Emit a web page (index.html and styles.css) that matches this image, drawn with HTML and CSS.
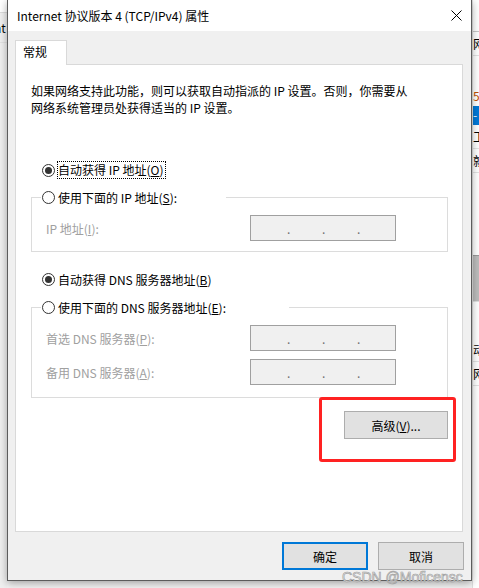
FILE: index.html
```html
<!DOCTYPE html>
<html lang="zh-CN">
<head>
    <meta charset="UTF-8">
    <meta name="viewport" content="width=device-width, initial-scale=1.0">
    <title>Internet 协议版本 4 (TCP/IPv4) 属性</title>
    <link rel="stylesheet" href="styles.css">
</head>
<body>
    <div class="desktop">
        <div class="side side-left">
            <div class="bg-white"></div>
            <div class="bg-text">nt</div>
        </div>

        <div class="dialog">
            <div class="titlebar">
                <span class="title">Internet 协议版本 4 (TCP/IPv4) 属性</span>
                <svg class="close" width="11" height="11" viewBox="0 0 11 11">
                    <path d="M0.5 0.5 L10.5 10.5 M10.5 0.5 L0.5 10.5" stroke="#000" stroke-width="1" fill="none"/>
                </svg>
            </div>

            <div class="client">
                <div class="tabs">
                    <div class="tab">常规</div>
                </div>
                <div class="panel">
                    <p class="desc">如果网络支持此功能，则可以获取自动指派的 IP 设置。否则，你需要从<br>网络系统管理员处获得适当的 IP 设置。</p>

                    <div class="radio checked radio-first">
                        <span class="dot"></span><span class="focus">自动获得 IP 地址(<u>O</u>)</span>
                    </div>

                    <fieldset class="group group-ip">
                        <legend class="legend-ip">
                            <span class="radio"><span class="dot"></span>使用下面的 IP 地址(<u>S</u>):</span>
                        </legend>
                        <div class="field">
                            <span class="field-label">IP 地址(<u>I</u>):</span>
                            <span class="ipbox"><i>.</i><i>.</i><i>.</i></span>
                        </div>
                    </fieldset>

                    <div class="radio checked radio-dns">
                        <span class="dot"></span>自动获得 DNS 服务器地址(<u>B</u>)
                    </div>

                    <fieldset class="group group-dns">
                        <legend class="legend-dns">
                            <span class="radio"><span class="dot"></span>使用下面的 DNS 服务器地址(<u>E</u>):</span>
                        </legend>
                        <div class="field">
                            <span class="field-label">首选 DNS 服务器(<u>P</u>):</span>
                            <span class="ipbox"><i>.</i><i>.</i><i>.</i></span>
                        </div>
                        <div class="field">
                            <span class="field-label">备用 DNS 服务器(<u>A</u>):</span>
                            <span class="ipbox"><i>.</i><i>.</i><i>.</i></span>
                        </div>
                    </fieldset>

                    <button class="btn btn-adv">高级(<u>V</u>)...</button>
                </div>

                <div class="footer">
                    <button class="btn btn-default">确定</button>
                    <button class="btn">取消</button>
                </div>
            </div>
        </div>

        <div class="side side-right">
            <div class="bg-white bg-line"></div>
            <div class="bg-text">网络</div>
            <div class="bg-gap1"></div>
            <div class="bg-text bg-small">5 </div>
            <div class="bg-blue">- </div>
            <div class="bg-text">工作</div>
            <div class="bg-text">就绪</div>
            <div class="bg-gap2"></div>
            <div class="bg-grey"></div>
            <div class="bg-gap3"></div>
            <div class="bg-text">动网</div>
            <div class="bg-text">网络</div>
            <div class="bg-gap4"></div>
        </div>

        <!-- 标注框 -->
        <div class="annot"></div>
        <div class="watermark">CSDN @Moficensc</div>
    </div>
</body>
</html>
```

FILE: styles.css
```css
body {
    margin: 0;
    font-family: "Noto Sans CJK SC", sans-serif;
    font-size: 12px;
    color: #000;
}
.desktop {
    position: relative;
    display: flex;
    width: 479px;
    height: 588px;
    overflow: hidden;
    background-color: #f3f3f3;
}
.side {
    width: 7px;
    flex: none;
    overflow: hidden;
    white-space: nowrap;
}
.side-left {
    background-color: #f0f0f0;
}
.side-right {
    background-color: #fff;
    border-left: 1px solid #e0e0e0;
    box-sizing: border-box;
}
.bg-white {
    height: 12px;
    background-color: #fff;
    border-bottom: 1px solid #dcdcdc;
}
.side-right .bg-line {
    height: 31px;
    border-bottom-color: #c8c8c8;
}
.bg-text {
    height: 23px;
    line-height: 23px;
    border-bottom: 1px solid #e3e3e3;
    font-size: 12px;
}
.side-left .bg-text {
    height: 29px;
    line-height: 29px;
    text-indent: -6px;
}
.bg-gap1 { height: 30px; }
.bg-small { height: 20px; line-height: 20px; color: #c05000; border: none; }
.bg-blue {
    height: 19px;
    background-color: #0078d7;
    color: #fff;
}
.bg-gap2 { height: 82px; }
.bg-grey {
    height: 45px;
    background-color: #bcbcbc;
    border-top: 1px solid #999;
}
.bg-gap3 { height: 36px; border-top: 1px solid #e0e0e0; }
.bg-gap4 { height: 200px; }

.dialog {
    position: relative;
    z-index: 1;
    display: flex;
    flex-direction: column;
    width: 465px;
    height: 581px;
    box-sizing: border-box;
    border: 1px solid #5c5c5c;
    border-top: none;
    background-color: #f0f0f0;
    box-shadow: 0 2px 8px rgba(0, 0, 0, 0.35);
}
.titlebar {
    display: flex;
    align-items: center;
    height: 31px;
    padding: 0 9px;
    background-color: #fff;
}
.close {
    margin-left: auto;
}
.client {
    flex: 1;
    padding: 9px 8px 0 7px;
}
.tabs {
    position: relative;
    z-index: 1;
    display: flex;
    margin-bottom: -1px;
}
.tab {
    width: 52px;
    height: 25px;
    box-sizing: border-box;
    padding: 2px 0 0 7px;
    line-height: 17px;
    border: 1px solid #d9d9d9;
    border-bottom: none;
    background-color: #fff;
}
.panel {
    height: 468px;
    box-sizing: border-box;
    padding-top: 17px;
    border: 1px solid #d9d9d9;
    background-color: #fff;
}
.desc {
    margin: 0 0 0 15px;
    line-height: 17px;
}
.radio {
    display: flex;
    align-items: center;
    height: 20px;
    white-space: nowrap;
}
.radio-first {
    margin: 44px 0 0 26px;
}
.radio-dns {
    margin: 17px 0 0 26px;
}
.dot {
    display: flex;
    align-items: center;
    justify-content: center;
    width: 13px;
    height: 13px;
    box-sizing: border-box;
    margin-right: 3px;
    border: 1px solid #333;
    border-radius: 50%;
    background-color: #fff;
}
.checked .dot::after {
    content: "";
    width: 7px;
    height: 7px;
    border-radius: 50%;
    background-color: #333;
}
.focus {
    line-height: 16px;
    padding-right: 1px;
    outline: 1px dotted #000;
}
.group {
    width: 417px;
    box-sizing: border-box;
    min-width: 0;
    margin: 7px 0 0 15px;
    padding: 0 0 10px 0;
    border: 1px solid #dcdcdc;
}
.group-dns {
    margin-top: 8px;
    padding-bottom: 12px;
}
.group legend {
    box-sizing: border-box;
    margin-left: 9px;
    padding: 0 0 0 1px;
}
.legend-ip {
    width: 185px;
}
.legend-dns {
    width: 248px;
}
.field {
    display: flex;
    align-items: center;
    margin-top: 8px;
    padding-left: 14px;
    color: #a0a0a0;
}
.field-label {
    width: 204px;
}
.ipbox {
    display: flex;
    width: 146px;
    height: 26px;
    box-sizing: border-box;
    padding-left: 36px;
    border: 1px solid #a0a0a0;
    background-color: #f0f0f0;
}
.ipbox i {
    width: 35px;
    font-style: normal;
    line-height: 26px;
    color: #707070;
}
.btn {
    height: 28px;
    box-sizing: border-box;
    padding: 0;
    font: inherit;
    color: #000;
    border: 1px solid #adadad;
    background-color: #e1e1e1;
}
.btn-adv {
    display: block;
    width: 104px;
    margin: 13px 0 0 328px;
}
.footer {
    display: flex;
    justify-content: flex-end;
    gap: 10px;
    margin-right: -1px;
    padding-top: 10px;
}
.footer .btn {
    width: 86px;
}
.btn-default {
    border: 2px solid #0078d7;
}
.annot {
    position: absolute;
    z-index: 2;
    left: 319px;
    top: 397px;
    width: 137px;
    height: 65px;
    box-sizing: border-box;
    border: 3px solid #f22;
    border-radius: 3px;
}
.watermark {
    position: absolute;
    z-index: 2;
    left: 342px;
    top: 569px;
    font-family: "Liberation Sans", Arial, sans-serif;
    font-size: 14px;
    color: rgba(235, 235, 235, 0.9);
    -webkit-text-stroke: 0.6px #9a9a9a;
}
```
